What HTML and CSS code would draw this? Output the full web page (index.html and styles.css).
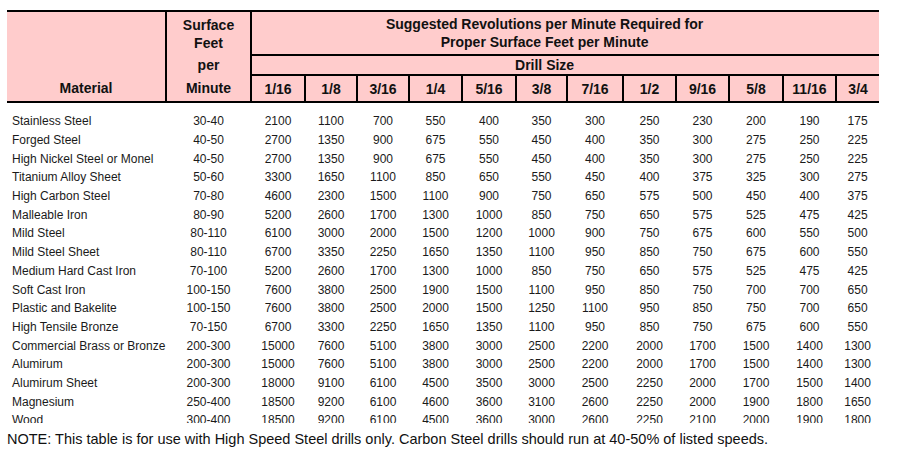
FILE: index.html
```html
<!DOCTYPE html>
<html>
<head>
<meta charset="utf-8">
<link rel="stylesheet" href="styles.css">
</head>
<body>
<div class="page">
  <div class="clip">
    <table class="speeds">
      <colgroup>
        <col style="width:159px"><col style="width:85px">
        <col style="width:54px"><col style="width:52px"><col style="width:52px"><col style="width:53px">
        <col style="width:54px"><col style="width:51px"><col style="width:56px"><col style="width:53px">
        <col style="width:53px"><col style="width:54px"><col style="width:53px"><col style="width:43px">
      </colgroup>
      <thead>
        <tr class="h1">
          <th class="mat"></th>
          <th class="sfpm two">Surface<br>Feet</th>
          <th class="title" colspan="12">Suggested Revolutions per Minute Required for<br>Proper Surface Feet per Minute</th>
        </tr>
        <tr class="h2">
          <th class="mat"></th>
          <th class="sfpm">per</th>
          <th class="drill" colspan="12">Drill Size</th>
        </tr>
        <tr class="h3">
          <th class="mat label">Material</th>
          <th class="sfpm">Minute</th>
          <th class="size">1/16</th><th class="size">1/8</th><th class="size">3/16</th><th class="size">1/4</th>
          <th class="size">5/16</th><th class="size">3/8</th><th class="size">7/16</th><th class="size">1/2</th>
          <th class="size">9/16</th><th class="size">5/8</th><th class="size">11/16</th><th class="size last">3/4</th>
        </tr>
      </thead>
      <tbody>
        <tr class="gap"><td colspan="14"></td></tr>
        <tr><td>Stainless Steel</td><td>30-40</td><td>2100</td><td>1100</td><td>700</td><td>550</td><td>400</td><td>350</td><td>300</td><td>250</td><td>230</td><td>200</td><td>190</td><td>175</td></tr>
        <tr><td>Forged Steel</td><td>40-50</td><td>2700</td><td>1350</td><td>900</td><td>675</td><td>550</td><td>450</td><td>400</td><td>350</td><td>300</td><td>275</td><td>250</td><td>225</td></tr>
        <tr><td>High Nickel Steel or Monel</td><td>40-50</td><td>2700</td><td>1350</td><td>900</td><td>675</td><td>550</td><td>450</td><td>400</td><td>350</td><td>300</td><td>275</td><td>250</td><td>225</td></tr>
        <tr><td>Titanium Alloy Sheet</td><td>50-60</td><td>3300</td><td>1650</td><td>1100</td><td>850</td><td>650</td><td>550</td><td>450</td><td>400</td><td>375</td><td>325</td><td>300</td><td>275</td></tr>
        <tr><td>High Carbon Steel</td><td>70-80</td><td>4600</td><td>2300</td><td>1500</td><td>1100</td><td>900</td><td>750</td><td>650</td><td>575</td><td>500</td><td>450</td><td>400</td><td>375</td></tr>
        <tr><td>Malleable Iron</td><td>80-90</td><td>5200</td><td>2600</td><td>1700</td><td>1300</td><td>1000</td><td>850</td><td>750</td><td>650</td><td>575</td><td>525</td><td>475</td><td>425</td></tr>
        <tr><td>Mild Steel</td><td>80-110</td><td>6100</td><td>3000</td><td>2000</td><td>1500</td><td>1200</td><td>1000</td><td>900</td><td>750</td><td>675</td><td>600</td><td>550</td><td>500</td></tr>
        <tr><td>Mild Steel Sheet</td><td>80-110</td><td>6700</td><td>3350</td><td>2250</td><td>1650</td><td>1350</td><td>1100</td><td>950</td><td>850</td><td>750</td><td>675</td><td>600</td><td>550</td></tr>
        <tr><td>Medium Hard Cast Iron</td><td>70-100</td><td>5200</td><td>2600</td><td>1700</td><td>1300</td><td>1000</td><td>850</td><td>750</td><td>650</td><td>575</td><td>525</td><td>475</td><td>425</td></tr>
        <tr><td>Soft Cast Iron</td><td>100-150</td><td>7600</td><td>3800</td><td>2500</td><td>1900</td><td>1500</td><td>1100</td><td>950</td><td>850</td><td>750</td><td>700</td><td>700</td><td>650</td></tr>
        <tr><td>Plastic and Bakelite</td><td>100-150</td><td>7600</td><td>3800</td><td>2500</td><td>2000</td><td>1500</td><td>1250</td><td>1100</td><td>950</td><td>850</td><td>750</td><td>700</td><td>650</td></tr>
        <tr><td>High Tensile Bronze</td><td>70-150</td><td>6700</td><td>3300</td><td>2250</td><td>1650</td><td>1350</td><td>1100</td><td>950</td><td>850</td><td>750</td><td>675</td><td>600</td><td>550</td></tr>
        <tr><td>Commercial Brass or Bronze</td><td>200-300</td><td>15000</td><td>7600</td><td>5100</td><td>3800</td><td>3000</td><td>2500</td><td>2200</td><td>2000</td><td>1700</td><td>1500</td><td>1400</td><td>1300</td></tr>
        <tr><td>Alumirum</td><td>200-300</td><td>15000</td><td>7600</td><td>5100</td><td>3800</td><td>3000</td><td>2500</td><td>2200</td><td>2000</td><td>1700</td><td>1500</td><td>1400</td><td>1300</td></tr>
        <tr><td>Alumirum Sheet</td><td>200-300</td><td>18000</td><td>9100</td><td>6100</td><td>4500</td><td>3500</td><td>3000</td><td>2500</td><td>2250</td><td>2000</td><td>1700</td><td>1500</td><td>1400</td></tr>
        <tr><td>Magnesium</td><td>250-400</td><td>18500</td><td>9200</td><td>6100</td><td>4600</td><td>3600</td><td>3100</td><td>2600</td><td>2250</td><td>2000</td><td>1900</td><td>1800</td><td>1650</td></tr>
        <tr><td>Wood</td><td>300-400</td><td>18500</td><td>9200</td><td>6100</td><td>4500</td><td>3600</td><td>3000</td><td>2600</td><td>2250</td><td>2100</td><td>2000</td><td>1900</td><td>1800</td></tr>
      </tbody>
    </table>
  </div>
  <p class="note">NOTE: This table is for use with High Speed Steel drills only. Carbon Steel drills should run at 40-50% of listed speeds.</p>
</div>
</body>
</html>
```
FILE: styles.css
```css
html, body {
  margin: 0;
  padding: 0;
  background: #fff;
}
.page {
  padding: 10px 0 0 7px;
  font-family: "Liberation Sans", Arial, sans-serif;
  color: #111;
}
.clip {
  height: 413px;
  overflow: hidden;
}
.speeds {
  border-collapse: collapse;
  table-layout: fixed;
  width: 872px;
}
.speeds thead th {
  background: #ffcccc;
  font-weight: bold;
  font-size: 14px;
  color: #111;
  padding: 0;
  text-align: center;
  line-height: 18px;
}
.speeds thead tr.h1 th {
  border-top: 2px solid #000;
  height: 42px;
}
.speeds tr.h2 th {
  height: 18px;
}
.speeds tr.h3 th {
  height: 25px;
  border-bottom: 2px solid #000;
}
.speeds th.mat {
  border-right: 2px solid #000;
}
.speeds th.sfpm {
  border-right: 2px solid #000;
}
.speeds th.title,
.speeds th.drill {
  padding-right: 42px;
  border-bottom: 2px solid #000;
}
.speeds th.size {
  border-right: 2px solid #000;
}
.speeds th.size.last {
  border-right: none;
}
.speeds tbody td {
  font-size: 12px;
  height: 18.7px;
  padding: 0;
  text-align: center;
  white-space: nowrap;
  line-height: 14px;
  color: #1a1a1a;
}
.speeds tbody td:first-child {
  text-align: left;
  padding-left: 5px;
}
.speeds tr.gap td {
  height: 9px;
}
.note {
  margin: 8px 0 0 0;
  font-size: 14.5px;
  line-height: 16px;
}
```
